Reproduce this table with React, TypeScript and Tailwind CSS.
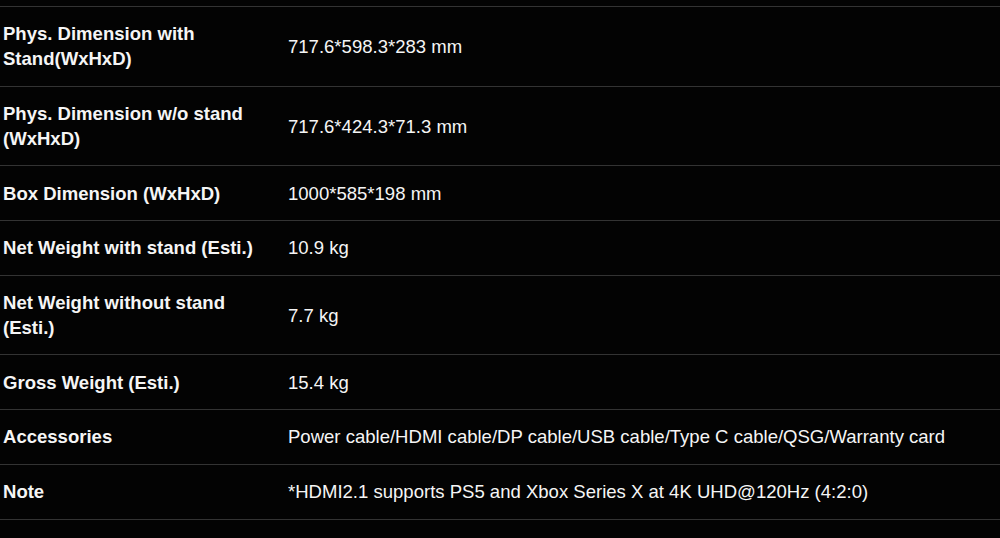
const specs: { label: string; value: string }[] = [
  { label: 'Phys. Dimension with Stand(WxHxD)', value: '717.6*598.3*283 mm' },
  { label: 'Phys. Dimension w/o stand (WxHxD)', value: '717.6*424.3*71.3 mm' },
  { label: 'Box Dimension (WxHxD)', value: '1000*585*198 mm' },
  { label: 'Net Weight with stand (Esti.)', value: '10.9 kg' },
  { label: 'Net Weight without stand (Esti.)', value: '7.7 kg' },
  { label: 'Gross Weight (Esti.)', value: '15.4 kg' },
  { label: 'Accessories', value: 'Power cable/HDMI cable/DP cable/USB cable/Type C cable/QSG/Warranty card' },
  { label: 'Note', value: '*HDMI2.1 supports PS5 and Xbox Series X at 4K UHD@120Hz (4:2:0)' },
];

export default function App() {
  return (
    <div
      className="min-h-[538px] w-[1000px] overflow-hidden bg-[#030303] pt-[6px] text-[18.55px] leading-[25px] text-[#f5f5f5]"
      style={{ fontFamily: '"Liberation Sans", Arial, sans-serif' }}
    >
      <div className="border-b border-[#333333]">
        {specs.map((row) => (
          <div key={row.label} className="flex items-center border-t border-[#333333] py-[14.35px]">
            <div className="w-[288px] shrink-0 pl-[3px] pr-4 font-bold">{row.label}</div>
            <div className="flex-1">{row.value}</div>
          </div>
        ))}
      </div>
    </div>
  );
}
